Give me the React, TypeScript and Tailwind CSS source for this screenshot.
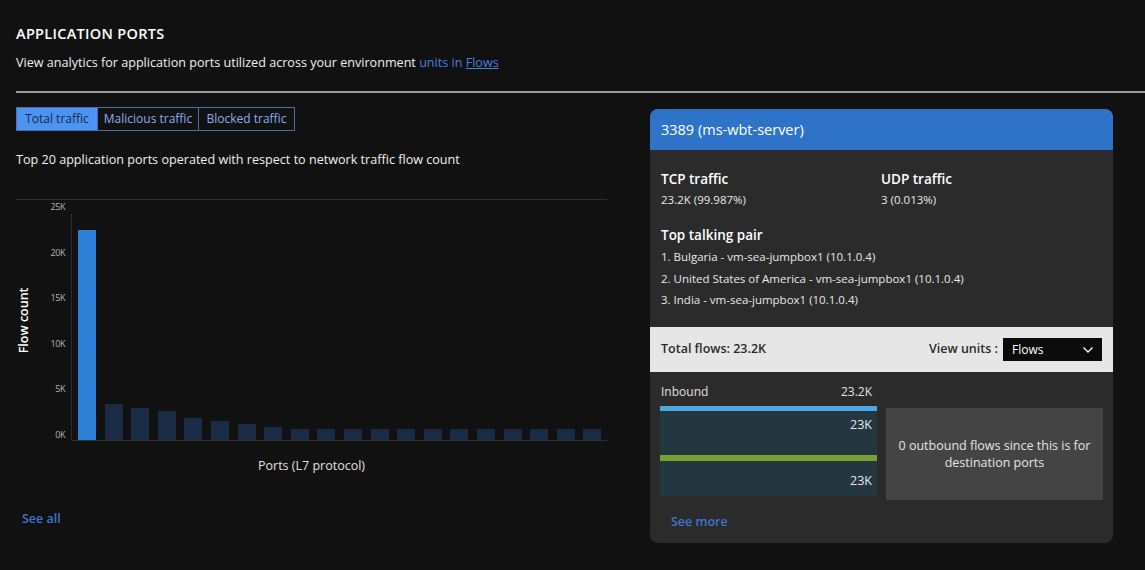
import React from 'react'

const bars = [210, 36, 32, 29, 22, 19, 16, 13, 11, 11, 11, 11, 11, 11, 11, 11, 11, 11, 11, 11]
const yLabels = ['25K', '20K', '15K', '10K', '5K', '0K']
const pairs = [
  '1. Bulgaria - vm-sea-jumpbox1 (10.1.0.4)',
  '2. United States of America - vm-sea-jumpbox1 (10.1.0.4)',
  '3. India - vm-sea-jumpbox1 (10.1.0.4)',
]

function Chart() {
  return (
    <div className="mt-[30px] w-[591px] border-t border-[#2e2e2e]">
      <div className="flex h-[241px]">
        <div className="w-[16px] flex items-center justify-center">
          <span className="-rotate-90 whitespace-nowrap text-[12.5px] font-semibold text-white">Flow count</span>
        </div>
        <div className="w-[33px] pt-[1px] flex flex-col justify-between items-end text-[9px] leading-[12px] text-[#b5b5b5] tracking-tighter">
          {yLabels.map(l => <span key={l}>{l}</span>)}
        </div>
        <div className="ml-[6px] mt-[14px] flex-1 border-l border-b border-[#2e2e2e] flex items-end gap-[8.6px] pl-[6px]">
          {bars.map((h, i) => (
            <div key={i} className={i === 0 ? 'w-[18px] bg-[#2f7fd6]' : 'w-[18px] bg-[#1a2b45]'} style={{ height: h }} />
          ))}
        </div>
      </div>
      <div className="mt-[16px] text-center text-[12.5px] text-[#e0e0e0]">Ports (L7 protocol)</div>
      <div className="mt-[34px] ml-[6px] text-[12.5px] font-semibold text-[#3f74cc]">See all</div>
    </div>
  )
}

function Card() {
  return (
    <div className="ml-[43px] mt-[16px] w-[463px] h-[434px] rounded-[8px] overflow-hidden bg-[#2b2b2b] flex flex-col">
      <div className="h-[41px] bg-[#2e73c8] px-[11px] flex items-center text-[14.5px] text-white">3389 (ms-wbt-server)</div>
      <div className="px-[11px] pt-[20px]">
        <div className="flex">
          <div className="w-[220px]">
            <div className="text-[13.5px] font-semibold text-white leading-[18px]">TCP traffic</div>
            <div className="mt-[4px] text-[11.5px] text-[#e8e8e8] leading-[16px]">23.2K (99.987%)</div>
          </div>
          <div>
            <div className="text-[13.5px] font-semibold text-white leading-[18px]">UDP traffic</div>
            <div className="mt-[4px] text-[11.5px] text-[#e8e8e8] leading-[16px]">3 (0.013%)</div>
          </div>
        </div>
        <div className="mt-[18px] text-[13.5px] font-semibold text-white leading-[18px]">Top talking pair</div>
        <div className="mt-[5px] flex flex-col gap-[5.5px]">
          {pairs.map(p => <div key={p} className="text-[11.5px] text-[#e8e8e8] leading-[16px]">{p}</div>)}
        </div>
      </div>
      <div className="mt-[19px] h-[45px] bg-[#e6e6e6] flex items-center pl-[11px] pr-[11px]">
        <span className="text-[12.5px] font-semibold text-[#2a2a2a]">Total flows: 23.2K</span>
        <span className="ml-auto text-[12.5px] font-semibold text-[#2a2a2a] mr-[5px]">View units :</span>
        <div className="w-[99px] h-[23px] bg-[#0b0b0b] flex items-center pl-[9px] pr-[8px] text-[12px] text-white">
          <span>Flows</span>
          <svg className="ml-auto" width="12" height="8" viewBox="0 0 12 8" fill="none">
            <path d="M1.5 1.5 L6 6 L10.5 1.5" stroke="white" strokeWidth="1.3" />
          </svg>
        </div>
      </div>
      <div className="px-[10px] pt-[12px] flex gap-[9px]">
        <div className="w-[217px]">
          <div className="flex justify-between pl-[1px] pr-[5px] text-[12px] text-[#e0e0e0] leading-[16px]">
            <span>Inbound</span>
            <span>23.2K</span>
          </div>
          <div className="mt-[6px] h-[90px] bg-[#243640] flex flex-col">
            <div className="h-[5px] bg-[#4aa9e2]" />
            <div className="h-[44px] flex items-start justify-end pr-[5px] pt-[6px] text-[12.5px] text-[#e8e8e8] leading-[16px]">23K</div>
            <div className="h-[6px] bg-[#77a033]" />
            <div className="flex-1 flex items-start justify-end pr-[5px] pt-[12px] text-[12.5px] text-[#e8e8e8] leading-[16px]">23K</div>
          </div>
        </div>
        <div className="mt-[24px] w-[217px] h-[92px] bg-[#444444] flex items-center justify-center text-center text-[12.5px] leading-[17px] text-[#e4e4e4] px-[8px]">
          0 outbound flows since this is for destination ports
        </div>
      </div>
      <div className="mt-[13px] pl-[21px] text-[12.5px] font-semibold text-[#3f74cc]">See more</div>
    </div>
  )
}

export default function App() {
  return (
    <div className="w-[1145px] h-[570px] overflow-hidden bg-[#111111] text-white font-['Open_Sans',sans-serif]">
      <div className="pl-[16px] pt-[24px]">
        <h1 className="text-[14.5px] font-semibold tracking-[0.3px] leading-[20px]">APPLICATION PORTS</h1>
        <p className="mt-[10px] text-[12.6px] leading-[18px] text-[#f0f0f0]">
          View analytics for application ports utilized across your environment{' '}
          <span className="text-[#4a7ee0]">units in </span>
          <span className="text-[#4a7ee0] underline">Flows</span>
        </p>
      </div>
      <div className="ml-[16px] mt-[19px] h-[2px] bg-[#9c9c9c]" />
      <div className="flex pl-[16px]">
        <div className="w-[591px]">
          <div className="mt-[14px] inline-flex h-[24px] border border-[#4a6db0] text-[12px]">
            <div className="w-[80px] bg-[#4c93f2] text-[#17294a] flex items-center justify-center">Total traffic</div>
            <div className="w-[101px] border-l border-[#4a6db0] text-[#8aaef0] flex items-center justify-center">Malicious traffic</div>
            <div className="w-[96px] border-l border-[#4a6db0] text-[#8aaef0] flex items-center justify-center">Blocked traffic</div>
          </div>
          <div className="mt-[20px] text-[12.6px] leading-[18px] text-[#f0f0f0]">Top 20 application ports operated with respect to network traffic flow count</div>
          <Chart />
        </div>
        <Card />
      </div>
    </div>
  )
}
